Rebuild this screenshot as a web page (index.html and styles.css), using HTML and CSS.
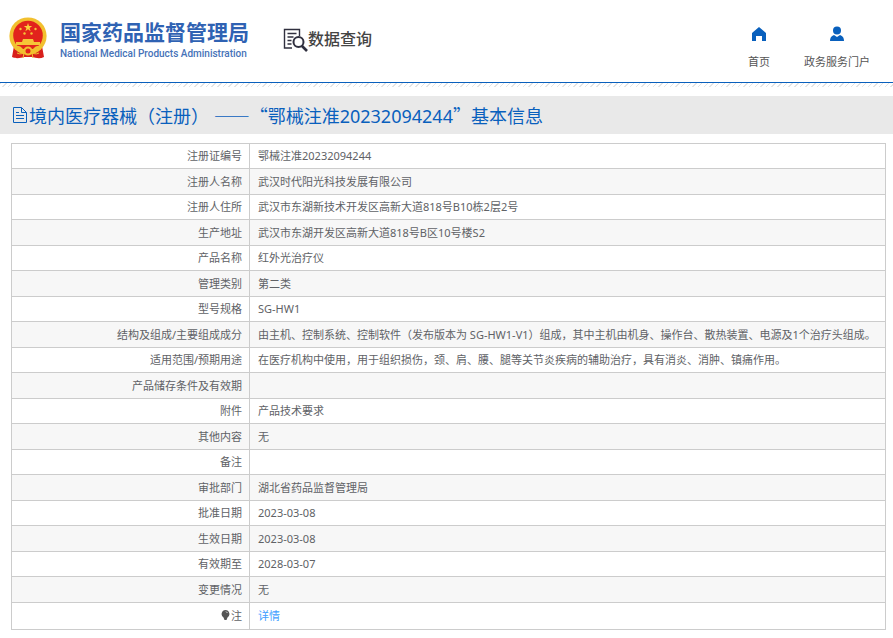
FILE: index.html
```html
<!DOCTYPE html>
<html lang="zh-CN">
<head>
<meta charset="utf-8">
<title>境内医疗器械（注册）基本信息</title>
<link rel="stylesheet" href="styles.css">
</head>
<body>
<header class="header">
  <div class="brand">
    <svg class="emblem" viewBox="0 0 38 42" aria-hidden="true">
      <path d="M5 29 3 40c4 2 9 1 12 0h8c4 1 8 2 12 0l-2-11z" fill="#d8201c"/>
      <circle cx="19" cy="19" r="18.6" fill="#f2c02f"/>
      <circle cx="19" cy="18.5" r="14.8" fill="#e2231c"/>
      <path d="m19 6 1 3h3.2l-2.6 2 1 3.200-2.600-2-2.600 2 1-3.200-2.600-2H18z" fill="#fbd23c"/>
      <g fill="#f6c437"><circle cx="11.500" cy="12" r="1.200"/><circle cx="26.500" cy="12" r="1.200"/><circle cx="15.500" cy="16.500" r="1.200"/><circle cx="22.500" cy="16.500" r="1.200"/>
      <path d="M14 22h10l1 3h6v3H7v-3h6z"/></g>
      <path d="M5 29c4-1 7 0 9 3h10c2-3 5-4 9-3l-4 5h-4l-2-1h-8l-2 1H9z" fill="#f2c02f"/>
      <circle cx="19" cy="34" r="3.500" fill="#e2231c" stroke="#f2c02f" stroke-width="2"/>
      <path d="M8 36c3 2 6 0 7 0l-1 5M30 36c-3 2-6 0-7 0l1 5" fill="none" stroke="#f2c02f"/>
    </svg>
    <div class="brand-text">
      <div class="brand-cn">国家药品监督管理局</div>
      <div class="brand-en">National Medical Products Administration</div>
    </div>
  </div>
  <div class="search-title">
    <svg class="search-icon" viewBox="0 0 25 24" aria-hidden="true" fill="none" stroke="#30303f">
      <path d="M9 20H1.500V1.500h15V8M4.500 5.500h9M4.500 9h6M4.500 12.500h4M4.500 16h4" stroke-width="1.400"/>
      <circle cx="15.500" cy="14" r="5" stroke-width="2"/>
      <path d="m19 18 5 5" stroke-width="2.600"/>
    </svg>
    <span>数据查询</span>
  </div>
  <nav class="nav">
    <a href="#"><svg viewBox="0 0 16 16" aria-hidden="true"><path d="M8 1 1 7v8h4v-5h6v5h4V7z" fill="#0960bd"/></svg>首页</a>
    <a href="#"><svg viewBox="0 0 16 16" aria-hidden="true"><circle cx="8" cy="4.500" r="4" fill="#0960bd"/><path d="M1 15c0-3 1-5 4-6l3 2 3-2c3 1 4 3 4 6z" fill="#0960bd"/></svg>政务服务门户</a>
  </nav>
</header>
<div class="hatch"></div>
<main>
  <h1 class="title">
    <svg viewBox="0 0 16 16" aria-hidden="true" fill="none" stroke="#0960bd"><path d="M1.500.5h8l5 5v10h-13zM9.500.5v5h5M4 5.500h3M4 8.500h8M4 11.500h8"/></svg>
    <span>境内医疗器械（注册） <span class="wide">——“</span>鄂械注准20232094244<span class="wide">”</span>基本信息</span>
  </h1>
  <table class="info">
    <tbody>
      <tr><th scope="row">注册证编号</th><td>鄂械注准20232094244</td></tr>
      <tr><th scope="row">注册人名称</th><td>武汉时代阳光科技发展有限公司</td></tr>
      <tr><th scope="row">注册人住所</th><td>武汉市东湖新技术开发区高新大道818号B10栋2层2号</td></tr>
      <tr><th scope="row">生产地址</th><td>武汉市东湖开发区高新大道818号B区10号楼S2</td></tr>
      <tr><th scope="row">产品名称</th><td>红外光治疗仪</td></tr>
      <tr><th scope="row">管理类别</th><td>第二类</td></tr>
      <tr><th scope="row">型号规格</th><td>SG-HW1</td></tr>
      <tr><th scope="row">结构及组成/主要组成成分</th><td>由主机、控制系统、控制软件（发布版本为 SG-HW1-V1）组成，其中主机由机身、操作台、散热装置、电源及1个治疗头组成。</td></tr>
      <tr><th scope="row">适用范围/预期用途</th><td>在医疗机构中使用，用于组织损伤，颈、肩、腰、腿等关节炎疾病的辅助治疗，具有消炎、消肿、镇痛作用。</td></tr>
      <tr><th scope="row">产品储存条件及有效期</th><td></td></tr>
      <tr><th scope="row">附件</th><td>产品技术要求</td></tr>
      <tr><th scope="row">其他内容</th><td>无</td></tr>
      <tr><th scope="row">备注</th><td></td></tr>
      <tr><th scope="row">审批部门</th><td>湖北省药品监督管理局</td></tr>
      <tr><th scope="row">批准日期</th><td>2023-03-08</td></tr>
      <tr><th scope="row">生效日期</th><td>2023-03-08</td></tr>
      <tr><th scope="row">有效期至</th><td>2028-03-07</td></tr>
      <tr><th scope="row">变更情况</th><td>无</td></tr>
      <tr><th scope="row"><svg class="bulb" viewBox="0 0 8 10" aria-hidden="true"><path d="M4 0a4 4 0 0 1 2 7.400L5 10H3L2 7.400A4 4 0 0 1 4 0z" fill="#555"/><path d="M4.500 1.500 6 3" stroke="#ddd"/></svg>注</th><td><a href="#">详情</a></td></tr>
    </tbody>
  </table>
</main>
</body>
</html>
```
FILE: styles.css
```css
* { box-sizing: border-box; }
body {
  margin: 0;
  background: #fff;
  color: #606266;
  font-family: "Noto Sans", "Noto Sans CJK SC", sans-serif;
  font-size: 11px;
}
a { text-decoration: none; }
svg { display: block; flex: none; }
.header {
  display: flex;
  align-items: flex-start;
  height: 83px;
  padding: 17px 17px 0 9px;
  border-bottom: 1px solid #0960bd;
}
.hatch {
  height: 4px;
  background: repeating-linear-gradient(135deg, #e4e4e4 0 1px, #fff 1px 4px);
}
.brand { display: flex; gap: 13px; }
.emblem { width: 38px; height: 42px; }
.brand-text { white-space: nowrap; }
.brand-cn {
  color: #2f62b3;
  font-size: 21px;
  font-weight: 700;
  line-height: 30px;
}
.brand-en {
  color: #4672b8;
  font-family: Roboto, "Liberation Sans", sans-serif;
  font-size: 10px;
  font-weight: 500;
  line-height: 14px;
}
.search-title {
  display: flex;
  margin-left: 34px;
  padding-top: 11px;
  color: #444;
  font-size: 16px;
  font-weight: 500;
  line-height: 22px;
}
.search-icon { width: 25px; height: 24px; }
.nav {
  display: flex;
  gap: 34px;
  margin-left: auto;
  padding: 9px 6px 0 0;
}
.nav a {
  display: flex;
  flex-direction: column;
  align-items: center;
  gap: 12px;
  color: #555;
  line-height: 16px;
}
.nav svg { width: 16px; height: 16px; }
.title {
  display: flex;
  align-items: center;
  height: 38px;
  margin: 9px 0;
  padding: 0 12px;
  background: #e9e9e9;
  color: #0960bd;
  font-size: 18px;
  font-weight: 400;
  line-height: 26px;
}
.title svg { width: 16px; height: 16px; margin-right: 1px; }
.wide { font-family: "Noto Sans CJK SC", sans-serif; }
main { padding-bottom: 8px; }
.info {
  width: calc(100% - 18px);
  margin: 0 7px 0 11px;
  border-collapse: collapse;
  table-layout: fixed;
  line-height: 16px;
}
.info tr { height: 25px; }
.info tr:nth-child(even) { height: 26px; background: #f7f7f7; }
.info tr:last-child { height: 27px; }
.info th, .info td {
  padding: 0 7px 0 8px;
  border: 1px solid #ccc;
  text-align: left;
  font-weight: 400;
}
.info th { width: 238px; text-align: right; }
.info a { color: #409eff; }
.bulb {
  display: inline-block;
  width: 9px;
  height: 10px;
  margin-right: 1px;
}
```
